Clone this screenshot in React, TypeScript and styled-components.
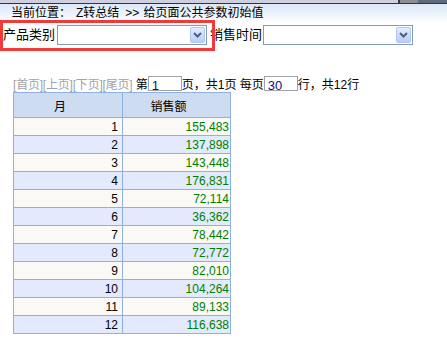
import React from "react";
import styled, { createGlobalStyle } from "styled-components";

const GlobalStyle = createGlobalStyle`
  html, body {
    margin: 0;
    padding: 0;
    background: #ffffff;
  }
  body {
    font-family: "Liberation Sans", "Noto Sans CJK SC", sans-serif;
    color: #000;
  }
`;

const Page = styled.div`
  position: relative;
  display: flex;
  flex-direction: column;
  width: 447px;
  height: 341px;
  overflow: hidden;
`;

const TopStrip = styled.div`
  display: flex;
  height: 3px;
`;

const StripSeg = styled.div<{ $w?: number; $c: string }>`
  flex: ${(p) => (p.$w ? `0 0 ${p.$w}px` : "1 1 auto")};
  background: ${(p) => p.$c};
`;

const DarkLine = styled.div`
  height: 1px;
  background: #2e3440;
`;

const LocationBar = styled.div`
  height: 19px;
  line-height: 19px;
  padding-left: 11px;
  font-size: 12px;
  white-space: pre;
  background: linear-gradient(#dbe7f7 0%, #eef4fc 55%, #ffffff 100%);
`;

const Crumb = styled.span<{ $gap: number }>`
  margin-left: ${(p) => p.$gap}px;
`;

const FilterRow = styled.div`
  display: flex;
  align-items: center;
  height: 20px;
  margin-top: 2px;
`;

const Label = styled.span`
  font-size: 13px;
  line-height: 20px;
  margin-left: 3px;
  white-space: nowrap;
`;

const Select = styled.div<{ $gap: number }>`
  box-sizing: border-box;
  display: flex;
  justify-content: flex-end;
  align-items: stretch;
  width: 150px;
  height: 20px;
  margin-left: ${(p) => p.$gap}px;
  padding: 1px;
  border: 1px solid #7f9db9;
  background: #ffffff;
`;

const SelectArrow = styled.div`
  box-sizing: border-box;
  width: 15px;
  display: flex;
  align-items: center;
  justify-content: center;
  border: 1px solid #b3c7ec;
  border-radius: 2px;
  background: linear-gradient(#e4edfe 0%, #cddcfb 50%, #b8cdf6 100%);
`;

const RedBox = styled.div`
  position: absolute;
  left: 0;
  top: 20px;
  width: 215px;
  height: 31px;
  box-sizing: border-box;
  border: 3px solid #ef3a3a;
  pointer-events: none;
`;

const Pager = styled.div`
  display: flex;
  align-items: center;
  height: 17px;
  margin-top: 30px;
  padding-left: 13px;
  font-size: 12px;
  white-space: pre;
`;

const Disabled = styled.span`
  color: #a3a3a3;
  letter-spacing: -0.2px;
`;

const PageInput = styled.div`
  box-sizing: border-box;
  width: 34px;
  height: 15px;
  padding: 0 0 0 3px;
  border: 1px solid #9ea3a9;
  font-size: 13px;
  line-height: 15px;
  color: #10107c;
`;

const InputText = styled.span`
  position: relative;
  top: 1px;
`;

const Grid = styled.div`
  display: grid;
  grid-template-columns: 108px 107px;
  grid-template-rows: 24px;
  grid-auto-rows: 17px;
  gap: 1px;
  width: max-content;
  margin-left: 13px;
  border: 1px solid #8fb1de;
  background: #8fb1de;
`;

const HeadCell = styled.div`
  display: flex;
  align-items: center;
  justify-content: center;
  padding-right: 16px;
  font-size: 12px;
  background: #cedcf1;
`;

const Cell = styled.div<{ $alt: boolean; $green?: boolean }>`
  display: flex;
  align-items: center;
  justify-content: flex-end;
  padding-right: ${(p) => (p.$green ? "1px" : "4px")};
  font-size: 12px;
  color: ${(p) => (p.$green ? "#008000" : "#000000")};
  background: ${(p) => (p.$alt ? "#e3eafd" : "#faf9f5")};
`;

const Chevron = () => (
  <svg width="9" height="6" viewBox="0 0 9 6">
    <polyline
      points="1,1 4.5,4.5 8,1"
      fill="none"
      stroke="#4b5f86"
      strokeWidth="2"
    />
  </svg>
);

const sales = [
  155483, 137898, 143448, 176831, 72114, 36362, 78442, 72772, 82010, 104264,
  89133, 116638,
];

export default function App() {
  return (
    <Page>
      <GlobalStyle />
      <TopStrip>
        <StripSeg $c="#cfcfdf" />
        <StripSeg $w={2} $c="#3a3a40" />
        <StripSeg $w={18} $c="#8e8e92" />
        <StripSeg $w={29} $c="#5b6b7c" />
      </TopStrip>
      <DarkLine />
      <LocationBar>
        <span>当前位置：</span>
        <Crumb $gap={5}>Z转总结</Crumb>
        <Crumb $gap={6}>&gt;&gt;</Crumb>
        <Crumb $gap={4}>给页面公共参数初始值</Crumb>
      </LocationBar>
      <FilterRow>
        <Label>产品类别</Label>
        <Select $gap={2}>
          <SelectArrow>
            <Chevron />
          </SelectArrow>
        </Select>
        <Label>销售时间</Label>
        <Select $gap={1}>
          <SelectArrow>
            <Chevron />
          </SelectArrow>
        </Select>
      </FilterRow>
      <Pager>
        <Disabled>[首页][上页][下页][尾页]</Disabled>
        <span> 第</span>
        <PageInput>
          <InputText>1</InputText>
        </PageInput>
        <span>页，共1页 每页</span>
        <PageInput>
          <InputText>30</InputText>
        </PageInput>
        <span>行，共12行</span>
      </Pager>
      <Grid>
        <HeadCell>月</HeadCell>
        <HeadCell>销售额</HeadCell>
        {sales.map((v, i) => (
          <React.Fragment key={i}>
            <Cell $alt={i % 2 === 1}>{i + 1}</Cell>
            <Cell $alt={i % 2 === 1} $green>
              {v.toLocaleString("en-US")}
            </Cell>
          </React.Fragment>
        ))}
      </Grid>
      <RedBox />
    </Page>
  );
}
